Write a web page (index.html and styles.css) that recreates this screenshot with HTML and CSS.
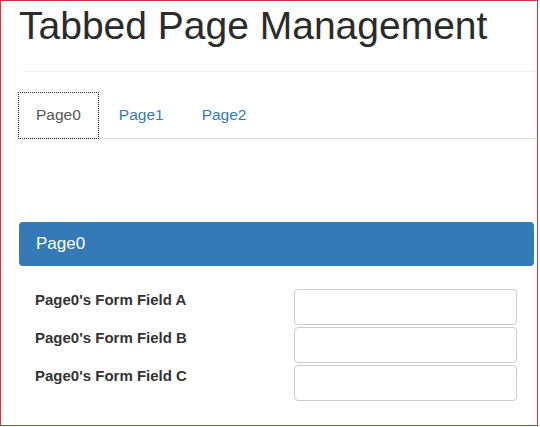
FILE: index.html
```html
<!DOCTYPE html>
<html lang="en">
<head>
  <meta charset="UTF-8">
  <title>Tabbed Page Management</title>
  <link rel="stylesheet" href="styles.css">
</head>
<body>

<div class="frame">
  <h1>Tabbed Page Management</h1>
  <hr class="divider">

  <!-- Page tabs -->
  <ul class="nav-tabs">
    <li><a href="#" class="active">Page0</a></li>
    <li><a href="#">Page1</a></li>
    <li><a href="#">Page2</a></li>
  </ul>

  <div class="panel">
    <div class="panel-heading">Page0</div>
    <form class="panel-body">
      <label for="field-a">Page0's Form Field A</label>
      <input type="text" id="field-a">
      <label for="field-b">Page0's Form Field B</label>
      <input type="text" id="field-b">
      <label for="field-c">Page0's Form Field C</label>
      <input type="text" id="field-c">
    </form>
  </div>
</div>

</body>
</html>
```

FILE: styles.css
```css
body {
  margin: 0;
  font-family: "Liberation Sans", Arial, sans-serif;
  color: #333;
  background: #fff;
}
.frame {
  box-sizing: border-box;
  width: 538px;
  height: 426px;
  border: 1px solid #d2393c;
  overflow: hidden;
}
h1 {
  margin: 4px 0 0 18px;
  font-size: 39px;
  font-weight: normal;
  line-height: 1.1;
  color: #2b2b2b;
}
.divider {
  margin: 23px 0 0 22px;
  border: 0;
  border-top: 1px solid #eee;
}
/* Tabs */
.nav-tabs {
  list-style: none;
  margin: 20px 0 0 17px;
  padding: 0;
  display: flex;
  gap: 2px;
  border-bottom: 1px solid #ddd;
}
.nav-tabs a {
  display: block;
  margin-bottom: -1px;
  padding: 11px 17px;
  border: 1px solid transparent;
  font-size: 15.5px;
  line-height: 22.8px;
  color: #337ab7;
  text-decoration: none;
}
.nav-tabs a.active {
  color: #555;
  background: #fff;
  border: 1px dotted #222;
}
/* Panel */
.panel {
  margin: 83px 0 0 18px;
  width: 515px;
}
.panel-heading {
  display: flex;
  align-items: center;
  height: 44px;
  padding-left: 17px;
  border-radius: 4px;
  background: #337ab7;
  color: #fff;
  font-size: 17px;
}
.panel-body {
  display: grid;
  grid-template-columns: 1fr 223px;
  row-gap: 2px;
  padding: 23px 17px 0 16px;
}
.panel-body label {
  font-size: 15px;
  font-weight: bold;
  line-height: 21.4px;
  color: #333;
}
.panel-body input {
  box-sizing: border-box;
  height: 36px;
  border: 1px solid #ccc;
  border-radius: 4px;
  padding: 6px 12px;
  font-size: 14px;
}
```
